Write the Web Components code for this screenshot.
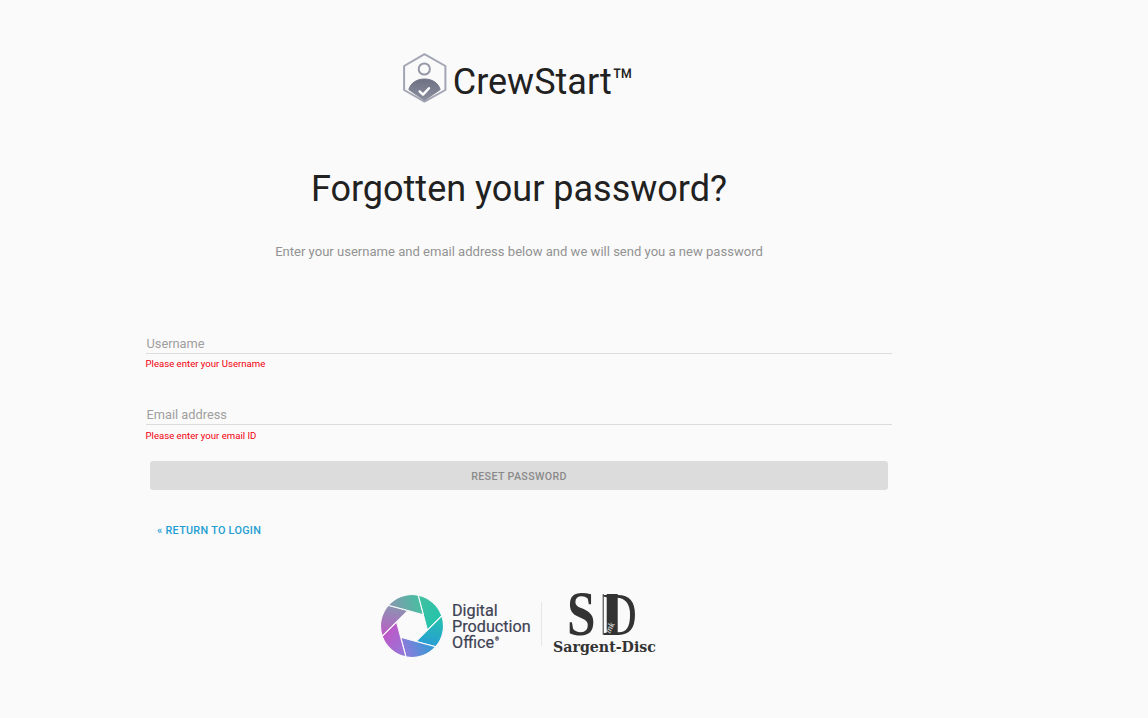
<!DOCTYPE html>
<html lang="en">
<head>
<meta charset="utf-8">
<title>CrewStart</title>
<style>
html,body{margin:0;padding:0;background:#fafafa;}
body{font-family:Roboto,"Liberation Sans",sans-serif;}
</style>
</head>
<body>
<cs-page>
  <cs-brand slot="brand" name="CrewStart"></cs-brand>
  <cs-hero title-text="Forgotten your password?" sub="Enter your username and email address below and we will send you a new password"></cs-hero>
  <cs-field label="Username" error="Please enter your Username"></cs-field>
  <cs-field label="Email address" error="Please enter your email ID" class="second"></cs-field>
  <cs-button>RESET PASSWORD</cs-button>
  <cs-link>« RETURN TO LOGIN</cs-link>
  <cs-partners></cs-partners>
</cs-page>
<script>
function shadow(el, html){ el.attachShadow({mode:'open'}).innerHTML = html; }

customElements.define('cs-page', class extends HTMLElement{
  constructor(){ super(); shadow(this, `<style>
    :host{display:block;min-height:718px;box-sizing:border-box;background:#fafafa;}
    .col{width:746px;margin-left:146px;display:flex;flex-direction:column;padding-top:53px;}
  </style><div class="col"><slot name="brand"></slot><slot></slot></div>`); }
});

customElements.define('cs-brand', class extends HTMLElement{
  constructor(){ super(); shadow(this, `<style>
    :host{display:flex;justify-content:center;align-items:flex-start;height:49px;padding-right:1px;}
    svg{display:block;flex:none;margin-right:6px;}
    .name{font-size:36px;line-height:59px;color:#212121;white-space:nowrap;}
    .wrap{display:flex;align-items:flex-start;}
  </style>
  <div class="wrap">
  <svg width="44" height="50" viewBox="0 0 44 50">
    <defs>
      <linearGradient id="b" x1="0" y1="0" x2="0" y2="1"><stop offset="0" stop-color="#6d7183"/><stop offset="1" stop-color="#8b8e9d"/></linearGradient>
    </defs>
    <path d="M21.5 1.2 42.4 13v24L21.5 48.6 1.1 37V13Z" fill="none" stroke="#a2a5b3" stroke-width="2" stroke-linejoin="round"/>
    <circle cx="21.3" cy="16" r="5.6" fill="none" stroke="#9599a8" stroke-width="2"/>
    <path d="M5.8 36.6C7.6 30 13.8 26 21.5 26S35.4 30 37.2 36.6L21.5 47.4Z" fill="url(#b)" stroke="url(#b)" stroke-width="1" stroke-linejoin="round"/>
    <path d="M16.6 38.4 20 41.6 26 35.2" fill="none" stroke="#fff" stroke-width="2.4" stroke-linecap="round" stroke-linejoin="round"/>
  </svg>
  <span class="name">${this.getAttribute('name')}™</span>
  </div>`); }
});

customElements.define('cs-hero', class extends HTMLElement{
  constructor(){ super(); shadow(this, `<style>
    :host{display:block;text-align:center;margin-top:63px;}
    h1{margin:0;font-weight:400;font-size:36px;line-height:48px;color:#212121;}
    p{margin:29px 0 0;font-size:13.05px;line-height:20px;color:#929292;}
  </style><h1>${this.getAttribute('title-text')}</h1><p>${this.getAttribute('sub')}</p>`); }
});

customElements.define('cs-field', class extends HTMLElement{
  constructor(){ super(); shadow(this, `<style>
    :host{display:block;margin-top:71px;}
    :host(.second){margin-top:34px;}
    .in{height:20px;line-height:22px;padding-left:.5px;font-size:12.8px;color:#9f9f9f;border-bottom:1px solid #dcdcdc;}
    .err{font-size:9.6px;line-height:12px;margin:4px 0 0 -.5px;color:#f4000f;}
    :host(.second) .err{margin-top:5px;}
  </style><div class="in">${this.getAttribute('label')}</div><div class="err">${this.getAttribute('error')}</div>`); }
});

customElements.define('cs-button', class extends HTMLElement{
  constructor(){ super(); shadow(this, `<style>
    :host{display:block;margin:19px 4px 0;}
    .b{height:29px;line-height:32px;text-align:center;background:#dcdcdc;border-radius:3px;font-size:10.7px;font-weight:500;letter-spacing:.35px;color:#8a8a8a;}
  </style><div class="b"><slot></slot></div>`); }
});

customElements.define('cs-link', class extends HTMLElement{
  constructor(){ super(); shadow(this, `<style>
    :host{display:block;margin:34px 0 0 11px;font-size:10.8px;line-height:14px;font-weight:500;letter-spacing:.3px;color:#239ed2;}
  </style><slot></slot>`); }
});

customElements.define('cs-partners', class extends HTMLElement{
  constructor(){ super();
    const cx=33,cy=33,R=31.5,h=16;
    const V=a=>[cx+h*Math.cos(a*Math.PI/180),cy+h*Math.sin(a*Math.PI/180)];
    const hit=(p,q)=>{
      let dx=p[0]-q[0],dy=p[1]-q[1],l=Math.hypot(dx,dy);dx/=l;dy/=l;
      const ox=p[0]-cx,oy=p[1]-cy,b=ox*dx+oy*dy,c=ox*ox+oy*oy-R*R;
      const t=-b+Math.sqrt(b*b-c);return [p[0]+t*dx,p[1]+t*dy];
    };
    const stops=[[0,[32,184,190]],[40,[38,158,212]],[90,[140,130,220]],[130,[150,100,220]],[180,[216,80,184]],[205,[190,110,180]],[225,[127,157,176]],[280,[70,190,160]],[320,[40,210,150]],[360,[32,184,190]]];
    const colorAt=p=>{
      let a=Math.atan2(p[1]-cy,p[0]-cx)*180/Math.PI; if(a<0)a+=360;
      for(let i=0;i<stops.length-1;i++){
        const [a0,c0]=stops[i],[a1,c1]=stops[i+1];
        if(a>=a0&&a<=a1){const t=(a-a0)/(a1-a0);return `rgb(${c0.map((v,j)=>Math.round(v+(c1[j]-v)*t)).join(',')})`;}
      }
      return 'rgb(32,184,190)';
    };
    const f=n=>n.toFixed(2);
    let grads='',blades='';
    for(let i=0;i<6;i++){
      const a=-45+i*60, A=V(a), B=V(a+60), C=V(a+120);
      const P1=hit(B,C), P0=hit(A,B);
      grads+=`<linearGradient id="g${i}" gradientUnits="userSpaceOnUse" x1="${f(P1[0])}" y1="${f(P1[1])}" x2="${f(P0[0])}" y2="${f(P0[1])}"><stop offset="0" stop-color="${colorAt(P1)}"/><stop offset="1" stop-color="${colorAt(P0)}"/></linearGradient>`;
      blades+=`<path d="M${f(A[0])} ${f(A[1])}L${f(B[0])} ${f(B[1])}L${f(P1[0])} ${f(P1[1])}A${R} ${R} 0 0 0 ${f(P0[0])} ${f(P0[1])}Z" fill="url(#g${i})" stroke="#fafafa" stroke-width="1.1" stroke-linejoin="round"/>`;
    }
    shadow(this, `<style>
    :host{display:flex;justify-content:flex-start;align-items:flex-start;margin:55px 0 0 233px;}
    .ap{display:block;flex:none;}
    .dpo{margin:10px 0 0 7px;width:84px;font-size:16.2px;line-height:16px;color:#3e4254;-webkit-text-stroke:.2px #3e4254;}
    .dpo sup{font-size:5px;line-height:0;vertical-align:7px;margin-left:1px;}
    .rule{width:1px;height:44px;margin:9px 0 0 5px;background:#e6e6e6;}
    .sd{display:block;flex:none;margin:-16px 0 0 11px;}
    </style>
    <svg class="ap" width="66" height="66" viewBox="0 0 66 66"><defs>${grads}</defs>${blades}</svg>
    <div class="dpo">Digital Production Office<sup>®</sup></div>
    <div class="rule"></div>
    <svg class="sd" width="104" height="84" viewBox="0 -2 104 84" font-family="'Liberation Serif',serif" fill="#333">
      <text transform="translate(14 55.5) scale(.8 1)" font-size="64" font-weight="700">S</text>
      <text transform="translate(49 55.5) scale(.78 1)" font-size="62">D</text>
      <rect x="49.7" y="15" width="1" height="40.5"/>
      <rect x="53.7" y="15" width="11" height="40.5"/>
      <text transform="translate(57 55) rotate(-65)" font-size="9" font-style="italic" fill="#fafafa">lnk</text>
      <text x="0" y="73" font-family="'DejaVu Serif',serif" font-size="14.2" font-weight="700">Sargent-Disc</text>
    </svg>`);
  }
});
</script>
</body>
</html>
